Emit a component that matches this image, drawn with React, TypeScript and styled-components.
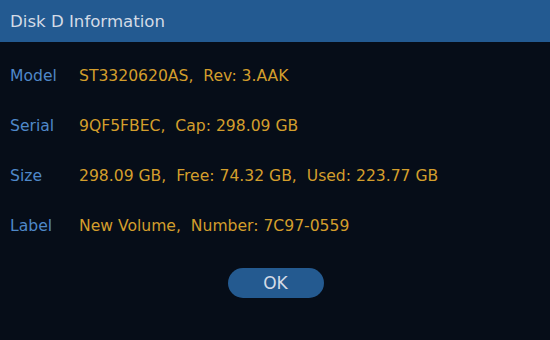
import React from "react";
import styled, { createGlobalStyle } from "styled-components";

const Global = createGlobalStyle`
  html, body { margin: 0; padding: 0; background: #060d18; }
  body { font-family: "DejaVu Sans", Verdana, sans-serif; }
`;

const Dialog = styled.div`
  width: 550px;
  height: 340px;
  background: #060d18;
  display: flex;
  flex-direction: column;
`;

const Header = styled.div`
  height: 42px;
  background: #235a91;
  color: #d3dbe6;
  font-size: 16.6px;
  display: flex;
  align-items: center;
  padding: 0 10px;
  box-sizing: border-box;
`;

const Body = styled.div`
  display: flex;
  flex-direction: column;
  padding-top: 9px;
`;

const Row = styled.div`
  height: 50px;
  display: flex;
  align-items: center;
  padding-left: 10px;
  font-size: 15.6px;
`;

const Label = styled.span`
  width: 69px;
  color: #4f88c8;
`;

const Value = styled.span`
  color: #d39e2c;
  white-space: pre;
`;

const Footer = styled.div`
  display: flex;
  justify-content: center;
  padding-top: 17px;
  padding-left: 1px;
`;

const OkButton = styled.button`
  width: 96px;
  height: 30px;
  border: none;
  border-radius: 15px;
  background: #245a90;
  color: #d3dbe6;
  font-family: "DejaVu Sans", Verdana, sans-serif;
  font-size: 17px;
  padding: 0;
`;

const rows = [
  ["Model", "ST3320620AS,  Rev: 3.AAK"],
  ["Serial", "9QF5FBEC,  Cap: 298.09 GB"],
  ["Size", "298.09 GB,  Free: 74.32 GB,  Used: 223.77 GB"],
  ["Label", "New Volume,  Number: 7C97-0559"],
];

export default function App() {
  return (
    <>
      <Global />
      <Dialog>
        <Header>Disk D Information</Header>
        <Body>
          {rows.map(([l, v]) => (
            <Row key={l}>
              <Label>{l}</Label>
              <Value>{v}</Value>
            </Row>
          ))}
        </Body>
        <Footer>
          <OkButton>OK</OkButton>
        </Footer>
      </Dialog>
    </>
  );
}
